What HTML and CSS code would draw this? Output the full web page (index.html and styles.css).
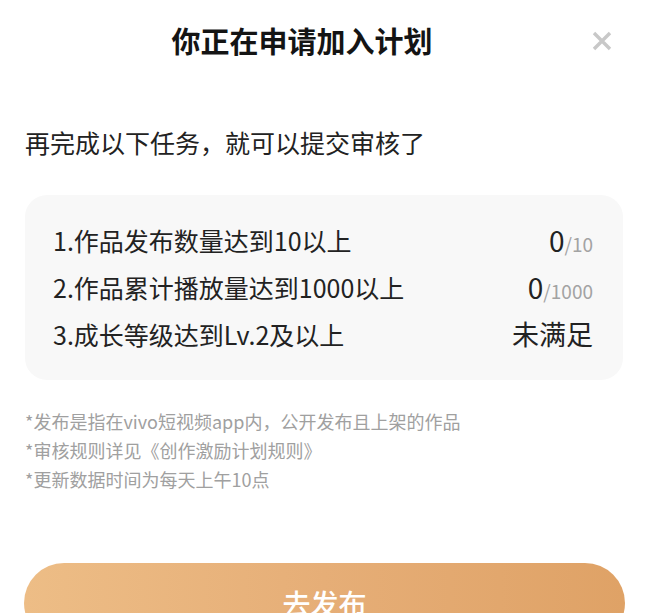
FILE: index.html
```html
<!DOCTYPE html>
<html lang="zh-CN">
<head>
<meta charset="utf-8">
<title>你正在申请加入计划</title>
<link rel="stylesheet" href="styles.css">
</head>
<body>
<div class="sheet">
  <header class="head">
    <h1 class="title">你正在申请加入计划</h1>
    <button class="close" aria-label="关闭">
      <svg viewBox="0 0 20 20" width="20" height="20"><path d="M2 2 L18 18 M18 2 L2 18" stroke="#c8c8c8" stroke-width="3.4" stroke-linecap="butt" fill="none"/></svg>
    </button>
  </header>
  <p class="lead">再完成以下任务，就可以提交审核了</p>
  <section class="tasks">
    <div class="task"><span class="name">1.作品发布数量达到10以上</span><span class="val"><span class="cur">0</span><span class="tot">/10</span></span></div>
    <div class="task"><span class="name">2.作品累计播放量达到1000以上</span><span class="val"><span class="cur">0</span><span class="tot">/1000</span></span></div>
    <div class="task"><span class="name">3.成长等级达到Lv.2及以上</span><span class="val"><span class="state">未满足</span></span></div>
  </section>
  <ul class="notes">
    <li>*发布是指在vivo短视频app内，公开发布且上架的作品</li>
    <li>*审核规则详见《创作激励计划规则》</li>
    <li>*更新数据时间为每天上午10点</li>
  </ul>
  <button class="cta">去发布</button>
</div>
</body>
</html>
```

FILE: styles.css
```css
html, body {
  margin: 0;
  padding: 0;
  overflow: hidden;
  background: #ffffff;
}
body {
  font-family: "Noto Sans CJK SC", "Noto Sans", sans-serif;
  color: #222222;
}
.sheet {
  width: 652px;
  height: 613px;
  display: flex;
  flex-direction: column;
}
.head {
  position: relative;
  height: 80px;
  display: flex;
  justify-content: center;
  align-items: center;
  padding-right: 48px;
}
.title {
  margin: 0;
  font-size: 29px;
  line-height: 80px;
  font-weight: 700;
  color: #141414;
}
.close {
  position: absolute;
  left: 592px;
  top: 31px;
  width: 20px;
  height: 20px;
  padding: 0;
  border: 0;
  background: none;
  display: block;
}
.close svg { display: block; }
.lead {
  margin: 45px 0 0 0;
  padding-left: 25px;
  font-size: 25px;
  line-height: 34px;
  color: #222222;
}
.tasks {
  margin: 36px 0 0 25px;
  width: 598px;
  box-sizing: border-box;
  padding: 21px 30px 23px 28px;
  background: #f8f8f8;
  border-radius: 22px;
}
.task {
  height: 47px;
  display: flex;
  justify-content: space-between;
  align-items: center;
}
.name {
  font-size: 25px;
  color: #222222;
}
.val {
  display: flex;
  align-items: baseline;
}
.cur {
  font-size: 28px;
  color: #222222;
}
.tot {
  font-size: 19px;
  color: #a3a3a3;
}
.state {
  font-size: 27px;
  color: #222222;
}
.notes {
  list-style: none;
  margin: 27px 0 0 0;
  padding: 0 0 0 25px;
  font-size: 18px;
  line-height: 29px;
  color: #a0a0a0;
}
.cta {
  margin: 69px 0 0 24px;
  width: 601px;
  height: 80px;
  flex-shrink: 0;
  border: 0;
  border-radius: 40px;
  background: linear-gradient(90deg, #edbd86 0%, #e6ae77 50%, #dfa266 100%);
  color: #ffffff;
  font-family: "Noto Sans CJK SC", sans-serif;
  font-size: 28px;
  font-weight: 500;
  padding: 0;
}
```
